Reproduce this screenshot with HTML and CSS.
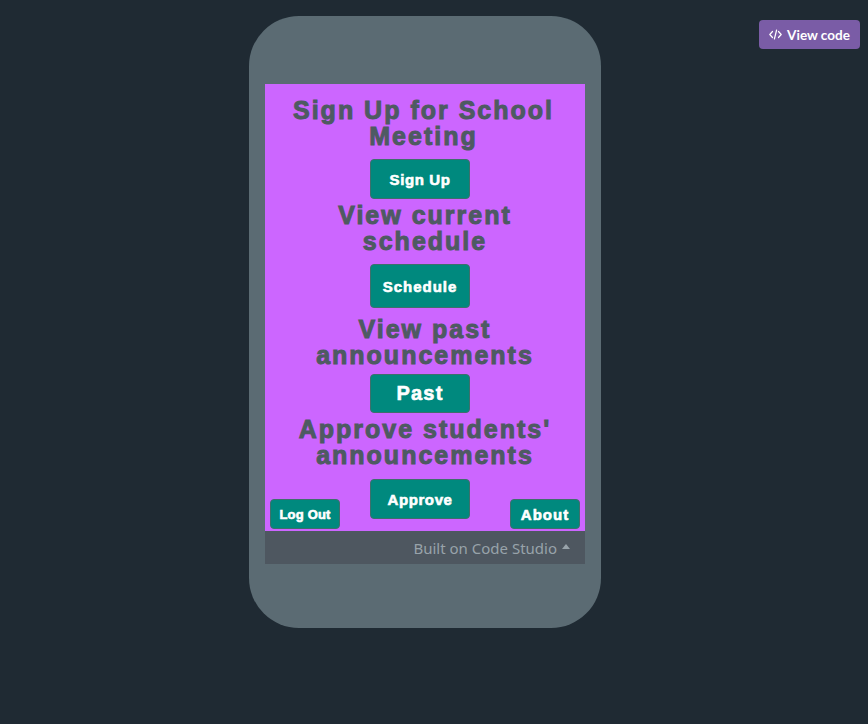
FILE: index.html
```html
<!DOCTYPE html>
<html>
<head>
<meta charset="utf-8">
<link rel="stylesheet" href="styles.css">
</head>
<body>
<div class="page">
  <div class="phone">
    <div class="screen">
      <h1 class="label label-signup">Sign Up for School<br>Meeting</h1>
      <button class="btn btn-center btn-signup">Sign Up</button>
      <h1 class="label label-schedule">View current<br>schedule</h1>
      <button class="btn btn-center btn-schedule">Schedule</button>
      <h1 class="label label-past">View past<br>announcements</h1>
      <button class="btn btn-center btn-past">Past</button>
      <h1 class="label label-approve">Approve students'<br>announcements</h1>
      <div class="bottom-row">
        <button class="btn btn-logout">Log Out</button>
        <button class="btn btn-approve">Approve</button>
        <button class="btn btn-about">About</button>
      </div>
    </div>
    <div class="footer">
      <span class="footer-text">Built on Code Studio</span>
      <span class="footer-caret"></span>
    </div>
  </div>
  <a class="view-code">
    <svg class="code-icon" width="13" height="11" viewBox="0 0 13 11" fill="none" stroke="#fff" stroke-width="1.2" stroke-linecap="round" stroke-linejoin="round">
      <path d="M3.5 2.5 L0.8 5.5 L3.5 8.5"/>
      <path d="M9.5 2.5 L12.2 5.5 L9.5 8.5"/>
      <path d="M7.6 1 L5.4 10"/>
    </svg>
    <span>View code</span>
  </a>
</div>
</body>
</html>
```

FILE: styles.css
```css
html, body {
  margin: 0;
  padding: 0;
}
body {
  background: #1f2a33;
  width: 868px;
  height: 724px;
  overflow: hidden;
}
.page {
  position: relative;
  width: 868px;
  height: 724px;
  padding: 16px 0 0 249px;
  box-sizing: border-box;
}
.phone {
  width: 352px;
  height: 612px;
  background: #5b6b73;
  border-radius: 50px;
  padding: 68px 16px 0 16px;
  box-sizing: border-box;
}
.screen {
  width: 320px;
  height: 447px;
  background: #cc66ff;
  display: flex;
  flex-direction: column;
  align-items: center;
  box-sizing: border-box;
  padding-top: 13px;
}
.label {
  margin: 0;
  font-family: "Liberation Sans", Arial, sans-serif;
  font-weight: 700;
  font-size: 25px;
  line-height: 26px;
  color: #4e5a62;
  text-align: center;
  letter-spacing: 2px;
  -webkit-text-stroke: 1px #4e5a62;
  height: 52px;
  white-space: nowrap;
}
.label-signup { margin-left: -3px; }
.btn {
  width: 100px;
  height: 40px;
  background: #00897e;
  border: 1px solid #3e6f6c;
  border-radius: 4px;
  color: #fff;
  font-family: "Liberation Sans", Arial, sans-serif;
  font-weight: 700;
  font-size: 15px;
  letter-spacing: 0.6px;
  -webkit-text-stroke: 0.6px #fff;
  padding: 0;
  box-sizing: border-box;
  display: flex;
  align-items: center;
  justify-content: center;
}
.btn-center { margin-right: 10px; }
.btn-signup { margin-top: 10px; }
.label-schedule { margin-top: 3px; }
.btn-schedule { margin-top: 10px; height: 44px; letter-spacing: 1px; }
.label-past { margin-top: 8px; }
.btn-past { margin-top: 6px; height: 39px; font-size: 20px; letter-spacing: 1.2px; }
.label-approve { margin-top: 3px; }
.bottom-row {
  width: 320px;
  display: grid;
  grid-template-columns: 100px 100px 1fr;
  align-items: start;
  margin-top: 11px;
  padding: 0 5px 0 5px;
  box-sizing: border-box;
}
.btn-approve {
  grid-column: 2;
  height: 40px;
}
.btn-logout {
  grid-column: 1;
  justify-self: start;
  width: 70px;
  height: 30px;
  margin-top: 20px;
  font-size: 13px;
  letter-spacing: 0.2px;
}
.btn-about {
  grid-column: 3;
  justify-self: end;
  width: 70px;
  height: 30px;
  margin-top: 20px;
  font-size: 15px;
  letter-spacing: 1px;
}
.footer {
  width: 320px;
  height: 33px;
  background: #4e5760;
  display: flex;
  align-items: center;
  justify-content: flex-end;
  padding-right: 15px;
  box-sizing: border-box;
  gap: 5px;
}
.footer-text {
  font-family: "Noto Sans", "Open Sans", sans-serif;
  font-size: 15px;
  letter-spacing: 0px;
  color: #98a3aa;
}
.footer-caret {
  width: 0;
  height: 0;
  border-left: 4px solid transparent;
  border-right: 4px solid transparent;
  border-bottom: 5px solid #98a3aa;
  margin-top: -2px;
}
.view-code {
  position: absolute;
  top: 20px;
  left: 759px;
  width: 101px;
  height: 29px;
  background: #7a5ca6;
  border-radius: 4px;
  display: flex;
  align-items: center;
  justify-content: center;
  gap: 5px;
  color: #fff;
  font-family: "Lato", "Liberation Sans", sans-serif;
  font-weight: 700;
  font-size: 13.5px;
}
.code-icon {
  display: block;
}
```
